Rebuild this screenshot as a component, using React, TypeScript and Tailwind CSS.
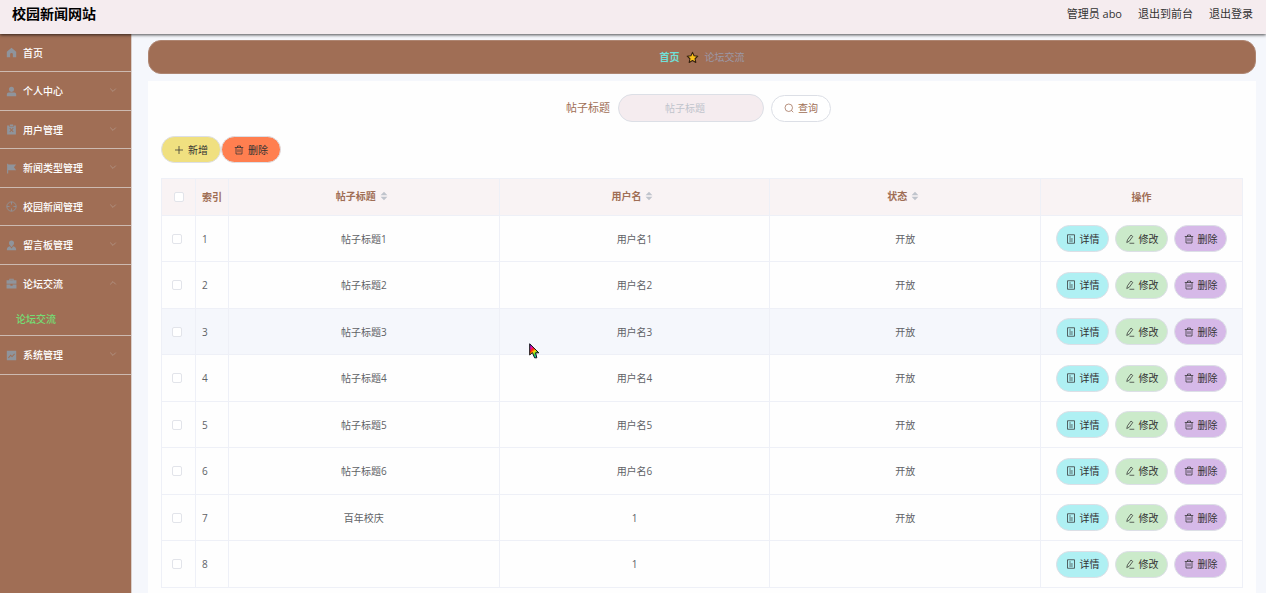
import React, { useState } from 'react';

type IconName =
  | 'home' | 'user' | 'clipboard' | 'flag' | 'aim' | 'person' | 'briefcase' | 'chart'
  | 'plus' | 'trash' | 'search' | 'doc' | 'edit' | 'down' | 'up';

interface MenuItem {
  title: string;
  icon: IconName;
  children?: string[];
  leaf?: boolean;
}

interface Post {
  id: number;
  title: string;
  user: string;
  status: string;
}

const menu: MenuItem[] = [
  { title: '首页', icon: 'home', leaf: true },
  { title: '个人中心', icon: 'user' },
  { title: '用户管理', icon: 'clipboard' },
  { title: '新闻类型管理', icon: 'flag' },
  { title: '校园新闻管理', icon: 'aim' },
  { title: '留言板管理', icon: 'person' },
  { title: '论坛交流', icon: 'briefcase', children: ['论坛交流'] },
  { title: '系统管理', icon: 'chart' },
];

const posts: Post[] = [
  { id: 1, title: '帖子标题1', user: '用户名1', status: '开放' },
  { id: 2, title: '帖子标题2', user: '用户名2', status: '开放' },
  { id: 3, title: '帖子标题3', user: '用户名3', status: '开放' },
  { id: 4, title: '帖子标题4', user: '用户名4', status: '开放' },
  { id: 5, title: '帖子标题5', user: '用户名5', status: '开放' },
  { id: 6, title: '帖子标题6', user: '用户名6', status: '开放' },
  { id: 7, title: '百年校庆', user: '1', status: '开放' },
  { id: 8, title: '', user: '1', status: '' },
];

const solid: Partial<Record<IconName, React.ReactNode>> = {
  home: <path d="M10 1.5 1.5 8.6V18.5h6v-5a2.5 2.5 0 0 1 5 0v5h6V8.6z" />,
  user: <path d="M10 1.5a4.6 4.6 0 1 1 0 9.2 4.6 4.6 0 0 1 0-9.2zM1.5 18.5v-3.2a3.4 3.4 0 0 1 3.4-3.4h10.2a3.4 3.4 0 0 1 3.4 3.4v3.2z" />,
  clipboard: <path fillRule="evenodd" d="M2 2.5h4V5h8V2.5h4v16.5H2zM7 1h6v3H7zM6.2 8.2 8.8 11l-2.6 2.8 1.2 1.2 2.6-2.8 2.6 2.8 1.2-1.2-2.6-2.8 2.6-2.8L12.6 7 10 9.8 7.4 7z" />,
  flag: <path d="M2 1.5h2v1h14.500l-4 5 4 5.500H4v6H2z" />,
  person: <path d="M10 1a4.600 4.600 0 0 1 4.600 4.600c0 2.200-1.300 4.300-2.900 5.100L10 13l-1.700-2.300C6.700 9.900 5.400 7.800 5.400 5.600A4.600 4.600 0 0 1 10 1zM1.500 18.500c0-4 1.800-6.300 5.500-7l3 3.800 3-3.800c3.700.7 5.500 3 5.500 7z" />,
  briefcase: <path fillRule="evenodd" d="M6 4V1.500h8V4h5v6.500H1V4zm1.500 0h5V3h-5zM1 12h7v2h4v-2h7v7H1z" />,
  chart: <path fillRule="evenodd" d="M1.500 1.500h17v17h-17zM3.800 13.600l1.200 1.200 3.600-4 2.400 2.300 5.200-5.600-1.200-1.200-4.100 4.400-2.400-2.300z" />,
};

const outline: Partial<Record<IconName, React.ReactNode>> = {
  aim: <><circle cx="10" cy="10" r="8.500" /><path d="M10 1.500v5M10 13.500v5M1.500 10h5M13.500 10h5" /></>,
  plus: <path d="M10 2v16M2 10h16" />,
  trash: <path d="M1.500 5h17M7 5V2h6v3M4 5v13h12V5M8 8.500v6M12 8.500v6" />,
  search: <><circle cx="9.500" cy="9.500" r="7.500" /><path d="m15 15 3.500 3.500" /></>,
  doc: <path d="M3 1.500h14v17H3zM6.500 6h3M6.500 10h7M6.500 14h7" />,
  edit: <path d="M12 2 5 11.500 3.500 17l5-2.500L15.500 5zM9 18.500h9.500" />,
  down: <path d="m3 6.500 7 7 7-7" />,
  up: <path d="m3 13.500 7-7 7 7" />,
};

const Icon = ({ name, className }: { name: IconName; className: string }) => (
  solid[name]
    ? <svg viewBox="0 0 20 20" fill="currentColor" className={className} aria-hidden="true">{solid[name]}</svg>
    : <svg viewBox="0 0 20 20" fill="none" stroke="currentColor" strokeWidth="1.500" className={className} aria-hidden="true">{outline[name]}</svg>
);

const SortCaret = () => (
  <svg viewBox="0 0 8 10" className="w-2 h-[10px] text-[#c0c4cc]" fill="currentColor" aria-hidden="true">
    <path d="M4 .8 7.400 4.200H.6zM4 9.200.6 5.800h6.800z" />
  </svg>
);

const pill = 'inline-flex items-center justify-center gap-1 h-[27px] rounded-full border border-[#dcdfe6] text-[10px] leading-4';
const cell = 'border border-[#eef0f7] p-0';

const Checkbox = ({ label, checked, onChange }: { label: string; checked: boolean; onChange: () => void }) => (
  <input
    type="checkbox"
    aria-label={label}
    checked={checked}
    onChange={onChange}
    className="block appearance-none size-[10px] rounded-xs border border-[#e2e4ea] bg-white checked:bg-[#409eff]"
  />
);

const App: React.FC = () => {
  const [open, setOpen] = useState('论坛交流');
  const [keyword, setKeyword] = useState('');
  const [selected, setSelected] = useState<number[]>([]);

  const toggle = (id: number) =>
    setSelected(selected.includes(id) ? selected.filter(s => s !== id) : [...selected, id]);

  const toggleAll = () =>
    setSelected(selected.length === posts.length ? [] : posts.map(p => p.id));

  return (
    <div className="relative min-h-screen flex flex-col bg-[#f5f7fc] text-[10px] leading-4 text-[#606266] font-['Open_Sans','Noto_Sans_CJK_SC',sans-serif]">

      {/* Top bar */}
      <header className="relative z-10 flex items-center justify-between h-[34px] pb-[6px] pl-3 pr-[13px] bg-[#f5ecef] shadow-[0_1px_3px_rgba(0,0,0,0.7)]">
        <h1 className="text-sm leading-5 font-bold text-black">校园新闻网站</h1>
        <div className="flex gap-4 text-[11px] text-[#333]">
          <span>管理员 abo</span>
          <a href="#front">退出到前台</a>
          <a href="#logout">退出登录</a>
        </div>
      </header>

      <div className="flex flex-1">
        {/* Sidebar */}
        <nav className="w-[132px] shrink-0 bg-[#a06e55] border-r border-[#d9cfcb]">
          <ul>
            {menu.map(item => (
              <li key={item.title} className="group border-b border-[#cdbab1]">
                <button
                  onClick={() => setOpen(open === item.title ? '' : item.title)}
                  className="flex items-center w-full h-[37px] group-even:h-[38px] pl-[6px] pr-[14px] text-white font-medium"
                >
                  <Icon name={item.icon} className="size-[11px] mr-[6px] text-[#8f949c]" />
                  <span>{item.title}</span>
                  {!item.leaf && (
                    <Icon name={open === item.title ? 'up' : 'down'} className="size-2 mb-[2px] ml-auto text-[#b8a49b]" />
                  )}
                </button>
                {item.children && open === item.title && (
                  <div>
                    {item.children.map(child => (
                      <a key={child} href="#forum" className="flex items-center h-[33px] pl-4 font-medium text-[#74dd74]">{child}</a>
                    ))}
                  </div>
                )}
              </li>
            ))}
          </ul>
        </nav>

        <main className="flex flex-1 flex-col min-w-0 pt-[6px] pl-4 pr-[10px]">
          {/* Breadcrumb */}
          <div className="flex items-center justify-center gap-[6px] h-[34px] mb-[7px] rounded-[13px] border border-[#ae8571] bg-[#a06e55]">
            <a href="#home" className="font-bold text-[#70e0d8]">首页</a>
            <svg viewBox="0 0 24 24" className="size-[13px]" aria-hidden="true">
              <path d="m12 2.500 2.900 6.300 6.900.8-5.100 4.700 1.400 6.800-6.100-3.400-6.100 3.400 1.400-6.800-5.100-4.700 6.900-.8z" fill="#fcc21b" stroke="#33200f" strokeWidth="2" strokeLinejoin="round" />
            </svg>
            <span className="text-[#9c98a6]">论坛交流</span>
          </div>

          <div className="flex-1 bg-[#fefefe] px-[13px] pt-[13px]">
            {/* Search form */}
            <form className="flex items-center justify-center pr-[7px]" onSubmit={(e) => e.preventDefault()}>
              <label htmlFor="keyword" className="mr-2 text-[11px] text-[#a06e55]">帖子标题</label>
              <input
                id="keyword"
                value={keyword}
                onChange={(e) => setKeyword(e.target.value)}
                placeholder="帖子标题"
                className="w-[146px] h-7 mr-[7px] pr-3 rounded-full border border-[#dcdfe6] bg-[#f5ecef] text-center placeholder:text-[#c0c4cc] focus:outline-none"
              />
              <button type="submit" className={`${pill} w-[60px] bg-white text-[#a06e55]`}>
                <Icon name="search" className="size-[10px]" />查询
              </button>
            </form>

            <div className="flex mt-[14px] mb-[15px] text-[#333]">
              <button className={`${pill} w-[60px] bg-[#f0e080]`}>
                <Icon name="plus" className="size-[10px]" />新增
              </button>
              <button className={`${pill} w-[60px] bg-[#ff7f50]`}>
                <Icon name="trash" className="size-[10px]" />删除
              </button>
            </div>

            <table className="w-full table-fixed border-collapse text-center">
              <colgroup>
                <col className="w-[34px]" />
                <col className="w-[33px]" />
                <col />
                <col />
                <col />
                <col className="w-[202px]" />
              </colgroup>
              <thead>
                <tr className="h-[37px] bg-[#f9f3f4] text-[#a06e55]">
                  <th className={`${cell} pl-3`}>
                    <Checkbox label="全选" checked={selected.length === posts.length} onChange={toggleAll} />
                  </th>
                  <th className={cell}>索引</th>
                  {['帖子标题', '用户名', '状态'].map(name => (
                    <th key={name} className={cell}>
                      <span className="flex items-center justify-center gap-1 pr-1 pb-[2px]">{name}<SortCaret /></span>
                    </th>
                  ))}
                  <th className={cell}>操作</th>
                </tr>
              </thead>
              <tbody>
                {posts.map(post => (
                  <tr
                    key={post.id}
                    className={`odd:h-[46px] even:h-[47px] hover:bg-[#f5f7fa] ${post.id === 3 ? 'bg-[#f5f7fc]' : ''}`}
                  >
                    <td className={`${cell} pl-[10px]`}>
                      <Checkbox label={`选择 ${post.id}`} checked={selected.includes(post.id)} onChange={() => toggle(post.id)} />
                    </td>
                    <td className={`${cell} pl-[6px] text-left`}>{post.id}</td>
                    <td className={cell}>{post.title}</td>
                    <td className={cell}>{post.user}</td>
                    <td className={cell}>{post.status}</td>
                    <td className={cell}>
                      <div className="flex justify-center gap-[6px] text-[#333]">
                        <button className={`${pill} w-[53px] bg-[#aff0f3]`}>
                          <Icon name="doc" className="size-[10px]" />详情
                        </button>
                        <button className={`${pill} w-[53px] bg-[#cbeaca]`}>
                          <Icon name="edit" className="size-[10px]" />修改
                        </button>
                        <button className={`${pill} w-[53px] bg-[#d6b9e8]`}>
                          <Icon name="trash" className="size-[10px]" />删除
                        </button>
                      </div>
                    </td>
                  </tr>
                ))}
              </tbody>
            </table>
          </div>
        </main>
      </div>

      {/* Rainbow pointer */}
      <svg viewBox="0 0 11 16" className="absolute left-[529px] top-[343px] w-[11px] h-4 pointer-events-none" aria-hidden="true">
        <defs>
          <linearGradient id="rainbow" x1="0" y1="0" x2="0.6" y2="1">
            <stop offset="0.05" stopColor="#3a1ad0" />
            <stop offset="0.25" stopColor="#e010c0" />
            <stop offset="0.45" stopColor="#ff2010" />
            <stop offset="0.62" stopColor="#ffe000" />
            <stop offset="0.8" stopColor="#30e040" />
            <stop offset="1" stopColor="#10c0e0" />
          </linearGradient>
        </defs>
        <path d="M.7.8v11.200l2.700-2.400 2.200 5.200h2.200L6.600 9.800h3.200z" fill="url(#rainbow)" stroke="#111" strokeWidth="1" />
      </svg>
    </div>
  );
};

export default App;
